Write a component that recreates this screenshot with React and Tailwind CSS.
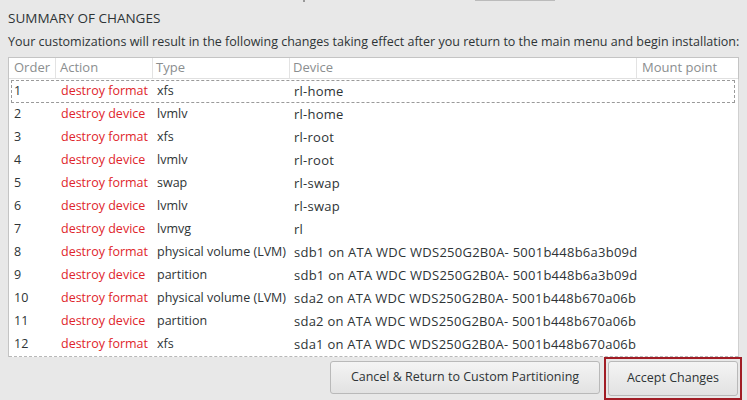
import React from 'react';

const rows = [
  ['1', 'destroy format', 'xfs', 'rl-home'],
  ['2', 'destroy device', 'lvmlv', 'rl-home'],
  ['3', 'destroy format', 'xfs', 'rl-root'],
  ['4', 'destroy device', 'lvmlv', 'rl-root'],
  ['5', 'destroy format', 'swap', 'rl-swap'],
  ['6', 'destroy device', 'lvmlv', 'rl-swap'],
  ['7', 'destroy device', 'lvmvg', 'rl'],
  ['8', 'destroy format', 'physical volume (LVM)', 'sdb1 on ATA WDC WDS250G2B0A- 5001b448b6a3b09d'],
  ['9', 'destroy device', 'partition', 'sdb1 on ATA WDC WDS250G2B0A- 5001b448b6a3b09d'],
  ['10', 'destroy format', 'physical volume (LVM)', 'sda2 on ATA WDC WDS250G2B0A- 5001b448b670a06b'],
  ['11', 'destroy device', 'partition', 'sda2 on ATA WDC WDS250G2B0A- 5001b448b670a06b'],
  ['12', 'destroy format', 'xfs', 'sda1 on ATA WDC WDS250G2B0A- 5001b448b670a06b'],
];

const cols = 'grid grid-cols-[47px_97px_137px_347px_1fr]';

export default function App() {
  return (
    <div
      className="w-[747px] h-[400px] bg-[#e8e8e8] text-[#2e3436] overflow-hidden flex flex-col"
      style={{ fontFamily: '"Open Sans", "Noto Sans", sans-serif' }}
    >
      <div className="h-[4px] flex">
        <div className="ml-[303px] w-[2px] h-[2px] bg-[#999]" />
        <div className="ml-[170px] w-[80px] h-[1px] bg-[#bbb]" />
      </div>
      <div className="pl-[8px] pt-[5px] text-[13.5px] leading-[18px]">SUMMARY OF CHANGES</div>
      <div className="pl-[8px] mt-[6px] text-[12.5px] leading-[18px] whitespace-nowrap">
        Your customizations will result in the following changes taking effect after you return to the main menu and begin installation:
      </div>
      <div className="ml-[8px] mt-[6px] w-[731px] h-[300px] bg-white border border-[#c4c4c4] border-b-0 flex flex-col text-[12.5px]">
        <div className={`${cols} h-[25px] items-center text-[#8b8e8f] text-[13px] border-b border-[#e0e0e0]`}>
          <div className="pl-[5px] h-full flex items-center border-r border-[#e3e3e3]">Order</div>
          <div className="pl-[4px] h-full flex items-center border-r border-[#e3e3e3]">Action</div>
          <div className="pl-[3px] h-full flex items-center border-r border-[#e3e3e3]">Type</div>
          <div className="pl-[3px] h-full flex items-center border-r border-[#e3e3e3]">Device</div>
          <div className="pl-[5px] h-full flex items-center">Mount point</div>
        </div>
        <div className="flex-1 flex flex-col pt-[1px] border-r border-[#d0d0d0] mr-[-1px]">
          {rows.map((r, i) => (
            <div
              key={r[0]}
              className={`${cols} h-[23px] items-center whitespace-nowrap ${
                i === 0 ? 'border border-dashed border-[#9a9a9a] mx-[2px] mr-[3px]' : 'mx-[2px] border border-transparent'
              }`}
            >
              <div className="pl-[2px]">{r[0]}</div>
              <div className="pl-[2px] text-[#e0252b]">{r[1]}</div>
              <div className="pl-[1px]">{r[2]}</div>
              <div className="pl-[1px] text-[13px] tracking-[0.25px]">{r[3]}</div>
              <div />
            </div>
          ))}
        </div>
        <div className="border-b border-dashed border-[#b8b8b8]" />
      </div>
      <div className="flex justify-end mr-[5px] gap-[4px]">
        <button className="mt-[4px] w-[270px] h-[33px] rounded-[3px] border border-[#b9b9b9] bg-gradient-to-b from-[#f4f4f4] to-[#e2e2e2] text-[12.5px] text-[#2e3436]">
          Cancel &amp; Return to Custom Partitioning
        </button>
        <div className="border-2 border-[#a11d25] p-[2px] h-[43px]">
          <button className="w-[130px] h-[35px] rounded-[3px] border border-[#b9b9b9] bg-gradient-to-b from-[#f4f4f4] to-[#e2e2e2] text-[12.5px] text-[#2e3436]">
            Accept Changes
          </button>
        </div>
      </div>
    </div>
  );
}
